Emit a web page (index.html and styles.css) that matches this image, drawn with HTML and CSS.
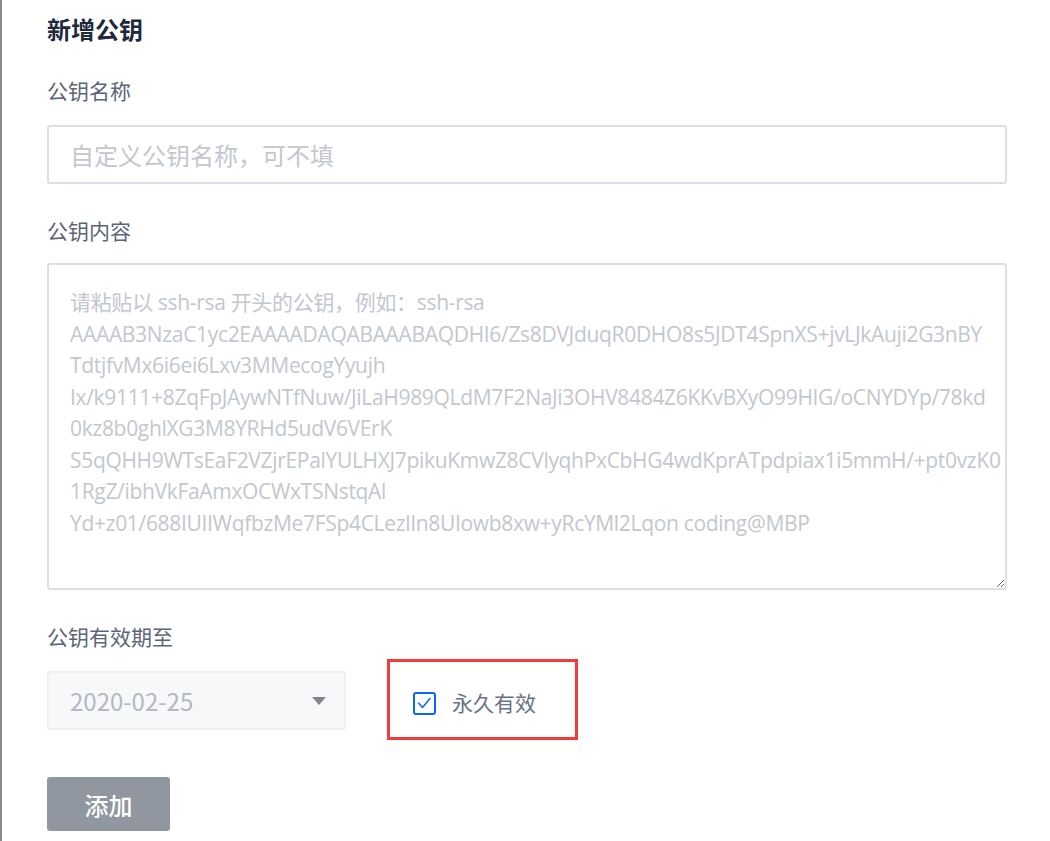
FILE: index.html
```html
<!DOCTYPE html>
<html lang="zh-CN">
<head>
<meta charset="utf-8">
<title>新增公钥</title>
<link rel="stylesheet" href="styles.css">
</head>
<body>
<div class="page">
  <h1 class="title">新增公钥</h1>

  <label class="label first">公钥名称</label>
  <input class="input" type="text" placeholder="自定义公钥名称，可不填">

  <label class="label">公钥内容</label>
  <textarea class="textarea" placeholder="请粘贴以 ssh-rsa 开头的公钥，例如：ssh-rsa&#10;AAAAB3NzaC1yc2EAAAADAQABAAABAQDHI6/Zs8DVJduqR0DHO8s5JDT4SpnXS+jvLJkAuji2G3nBY&#10;TdtjfvMx6i6ei6Lxv3MMecogYyujh&#10;Ix/k9111+8ZqFpJAywNTfNuw/JiLaH989QLdM7F2NaJi3OHV8484Z6KKvBXyO99HIG/oCNYDYp/78kd&#10;0kz8b0ghlXG3M8YRHd5udV6VErK&#10;S5qQHH9WTsEaF2VZjrEPalYULHXJ7pikuKmwZ8CVlyqhPxCbHG4wdKprATpdpiax1i5mmH/+pt0vzK0&#10;1RgZ/ibhVkFaAmxOCWxTSNstqAl&#10;Yd+z01/688IUIIWqfbzMe7FSp4CLezlIn8UIowb8xw+yRcYMl2Lqon coding@MBP"></textarea>

  <label class="label">公钥有效期至</label>
  <div class="row">
    <div class="select">
      <span class="select-value">2020-02-25</span>
      <span class="caret"></span>
    </div>
    <div class="highlight">
      <span class="checkbox">
        <svg width="19" height="19" viewBox="0 0 19 19"><polyline points="3.5,9 7.5,13.5 15,4.5" fill="none" stroke="#0a66ff" stroke-width="1.5" stroke-linecap="round" stroke-linejoin="round"/></svg>
      </span>
      <span class="check-text">永久有效</span>
    </div>
  </div>

  <button class="btn" type="button">添加</button>
</div>
</body>
</html>
```

FILE: styles.css
```css
* { box-sizing: border-box; }
html, body { margin: 0; padding: 0; background: #fff; }
body {
  font-family: "Open Sans", "Noto Sans CJK SC", sans-serif;
}
.page {
  border-left: 2px solid #8a8a8a;
  min-height: 841px;
  padding: 13px 43px 0 45px;
  display: flex;
  flex-direction: column;
  align-items: flex-start;
}
.title {
  margin: 0;
  font-size: 24px;
  line-height: 32px;
  font-weight: 700;
  color: #1e2a3b;
  font-family: "Noto Sans CJK SC", sans-serif;
}
.label {
  display: block;
  margin-top: 31px;
  font-size: 21px;
  line-height: 30px;
  color: #5c6678;
  font-family: "Noto Sans CJK SC", sans-serif;
}
.label.first { margin-top: 30px; }
.input {
  display: block;
  width: 100%;
  height: 59px;
  margin-top: 20px;
  border: 2px solid #dcdfe5;
  border-radius: 3px;
  padding: 0 21px;
  font-size: 24px;
  font-family: "Noto Sans CJK SC", sans-serif;
  outline: none;
  background: #fff;
}
.input::placeholder { color: #c3c7ce; }
.textarea {
  display: block;
  width: 100%;
  height: 327px;
  margin-top: 18px;
  border: 2px solid #dcdfe5;
  border-radius: 3px;
  padding: 22px 21px 10px;
  font-size: 21px;
  line-height: 31.5px;
  font-family: "Open Sans", "Noto Sans CJK SC", sans-serif;
  letter-spacing: -0.32px;
  white-space: pre;
  overflow: hidden;
  resize: vertical;
  outline: none;
  background: #fff;
}
.textarea::placeholder { color: #c3c7ce; white-space: pre; }
.row {
  display: flex;
  align-items: flex-start;
  margin-top: 8px;
}
.select {
  width: 299px;
  height: 59px;
  margin-top: 12px;
  background: #f7f8fa;
  border: 2px solid #eef0f3;
  border-radius: 3px;
  display: flex;
  align-items: center;
  justify-content: space-between;
  padding: 0 18px 0 21px;
}
.select-value {
  font-size: 24px;
  color: #b4b9c1;
  font-family: "Noto Sans CJK SC", sans-serif;
}
.caret {
  width: 0;
  height: 0;
  border-left: 7.5px solid transparent;
  border-right: 7.5px solid transparent;
  border-top: 8px solid #80858e;
}
.highlight {
  margin-left: 41px;
  width: 191px;
  height: 81px;
  border: 3px solid #f43b3b;
  display: flex;
  align-items: center;
  padding-left: 23px;
}
.checkbox {
  width: 23px;
  height: 23px;
  border: 2px solid #0a66ff;
  border-radius: 3px;
  display: flex;
  align-items: center;
  justify-content: center;
  margin-top: 7px;
}
.checkbox svg { width: 19px; height: 19px; display: block; }
.check-text {
  margin-left: 16px;
  font-size: 21px;
  color: #6a7285;
  font-family: "Noto Sans CJK SC", sans-serif;
  margin-top: 5px;
}
.btn {
  margin-top: 37px;
  width: 123px;
  height: 54px;
  background: #9097a0;
  border: none;
  border-radius: 3px;
  color: #fff;
  font-size: 24px;
  font-weight: 500;
  font-family: "Noto Sans CJK SC", sans-serif;
  padding: 0;
}
```
